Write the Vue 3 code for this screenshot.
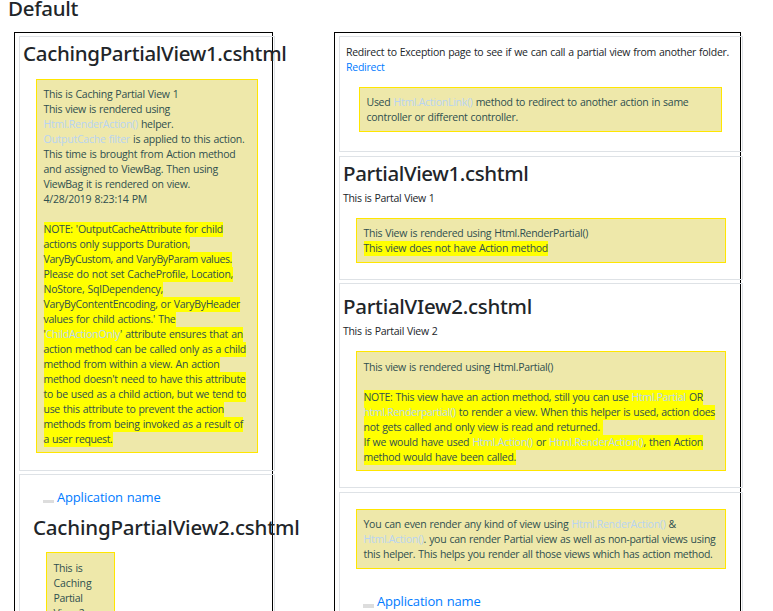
<script setup>
import { h } from 'vue'

// Spreads a line of text over a given width by adjusting its letter spacing.
const vFit = {
  mounted(el, { value }) {
    if (!value) return
    const natural = el.getBoundingClientRect().width
    el.style.letterSpacing = (value - natural) / el.textContent.length + 'px'
  },
}

// Turns "text [link] text" into segments; odd ones are links.
const segments = (text) => text.split(/[[\]]/)

const cachingInfo = [
  ['This is Caching Partial View 1', 135],
  ['This view is rendered using', 126.5],
  ['[Html.RenderAction()] helper.', 130],
  ['[OutputCache filter] is applied to this action.', 201],
  ['This time is brought from Action method', 192],
  ['and assigned to ViewBag. Then using', 174.5],
  ['ViewBag it is rendered on view.', 146.5],
  ['4/28/2019 8:23:14 PM', 103.5],
  ['', 0],
]
const cachingNote = [
  ["NOTE: 'OutputCacheAttribute for child", 179.5],
  ['actions only supports Duration,', 146.5],
  ['VaryByCustom, and VaryByParam values.', 188.5],
  ['Please do not set CacheProfile, Location,', 189.5],
  ['NoStore, SqlDependency,', 119.5],
  ['VaryByContentEncoding, or VaryByHeader', 196.5],
  ["values for child actions.' The", 132],
  ["'[ChildActionOnly]' attribute ensures that an", 199.5],
  ['action method can be called only as a child', 202.5],
  ['method from within a view. An action', 176],
  ["method doesn't need to have this attribute", 202],
  ['to be used as a child action, but we tend to', 202.5],
  ['use this attribute to prevent the action', 180.5],
  ['methods from being invoked as a result of', 199.5],
  ['a user request.', 69],
]
const caching2 = [['This is', 29], ['Caching', 38], ['Partial', 29], ['View 2', 31]]
const redirectInfo = [
  ['Used [Html.ActionLink()] method to redirect to another action in same', 322],
  ['controller or different controller.', 151.5],
]
const partial1Info = [['This View is rendered using Html.RenderPartial()', 224.5]]
const partial1Note = [['This view does not have Action method', 184.5]]
const partial2Info = [['This view is rendered using Html.Partial()', 189.5], ['', 0]]
const partial2Note = [
  ['NOTE: This view have an action method, still you can use [Html.Partial] OR', 339.5],
  ['[html.Renderpartial()] to render a view. When this helper is used, action does', 351.5],
  ['not gets called and only view is read and returned. ', 239.5],
  ['If we would have used [Html.Action()] or [Html.RenderAction()], then Action', 339.5],
  ['method would have been called.', 152.5],
]
const anyView = [
  ['You can even render any kind of view using [Html.RenderAction()] &', 312.5],
  ['[Html.Action()]. you can render Partial view as well as non-partial views using', 352],
  ['this helper. This helps you render all those views which has action method.', 349],
]

const fitLine = (width) => ({
  onVnodeMounted: ({ el }) => vFit.mounted(el, { value: width }),
})

const Lines = ({ rows, marked }) =>
  rows.map(([text, width]) =>
    h('div', { class: 'row' }, [
      h(
        'span',
        { class: ['line', { marked: marked && text }], ...fitLine(width) },
        segments(text).map((s, i) => (i % 2 ? h('a', { class: 'code' }, s) : s)),
      ),
    ]),
  )
Lines.props = { rows: Array, marked: Boolean }
</script>

<template>
  <main class="page">
    <h1 class="title"><span v-fit="70">Default</span></h1>
    <div class="columns">
      <section class="column left">
        <article class="panel caching1">
          <h2><span v-fit="263.5">CachingPartialView1.cshtml</span></h2>
          <div class="note">
            <Lines :rows="cachingInfo" />
            <Lines :rows="cachingNote" marked />
          </div>
        </article>
        <article class="panel caching2">
          <div class="brand"><i class="toggle"></i><a v-fit="103.5">Application name</a></div>
          <h2><span v-fit="266.5">CachingPartialView2.cshtml</span></h2>
          <div class="note"><Lines :rows="caching2" /></div>
        </article>
      </section>
      <section class="column right">
        <article class="panel redirect">
          <p><span v-fit="383">Redirect to Exception page to see if we can call a partial view from another folder.</span></p>
          <p><a v-fit="38.5">Redirect</a></p>
          <div class="note"><Lines :rows="redirectInfo" /></div>
        </article>
        <article class="panel partial1">
          <h2><span v-fit="185.5">PartialView1.cshtml</span></h2>
          <p><span v-fit="91.5">This is Partal View 1</span></p>
          <div class="note">
            <Lines :rows="partial1Info" />
            <Lines :rows="partial1Note" marked />
          </div>
        </article>
        <article class="panel partial2">
          <h2><span v-fit="189">PartialVIew2.cshtml</span></h2>
          <p><span v-fit="94.5">This is Partail View 2</span></p>
          <div class="note">
            <Lines :rows="partial2Info" />
            <Lines :rows="partial2Note" marked />
          </div>
        </article>
        <article class="panel anyview">
          <div class="note"><Lines :rows="anyView" /></div>
          <div class="brand"><i class="toggle"></i><a v-fit="103.5">Application name</a></div>
        </article>
      </section>
    </div>
  </main>
</template>

<style>
html, body { overflow: hidden; background: #fff; }
.row { height: 15px; }
.line { display: inline-block; height: 15px; line-height: 15px; vertical-align: top; white-space: pre; }
.line.marked { background: #ff0; }
.line .code { color: #b8d4f2; }
</style>

<style scoped>
.page {
  box-sizing: border-box;
  width: 773px;
  height: 611px;
  overflow: hidden;
  font: 10.5px/15px "Open Sans", "Noto Sans", sans-serif;
  word-spacing: 0.6px;
  color: #212529;
}
h1, h2 {
  margin: 0;
  font-family: "Noto Sans", "Open Sans", sans-serif;
  font-size: 20.5px;
  font-weight: 500;
  line-height: 25px;
  white-space: nowrap;
}
h1 span, h2 span, p span, p a, .brand a { display: inline-block; }
a { color: #007bff; }
p { margin: 0; height: 15px; white-space: nowrap; }
.title { height: 32px; padding-left: 8px; line-height: 16px; }
.columns { display: flex; align-items: flex-start; gap: 61px; padding-left: 14px; }
.column {
  box-sizing: border-box;
  display: flex;
  flex-direction: column;
  height: 700px;
  border: 1px solid #000;
  padding: 3px 0 0 4px;
}
.left { width: 259px; gap: 3px; }
.right { width: 407px; }
.panel { box-sizing: border-box; flex: none; border: 1px solid #dee2e6; }
.left .panel { width: 256px; }
.right .panel { width: 404px; }
.note {
  box-sizing: border-box;
  border: 1px solid #ffe600;
  background: #eee8aa;
  color: #2f4f4f;
  padding: 7px 0 0 6.5px;
}
.brand { display: flex; align-items: center; gap: 3px; height: 20px; font-size: 13px; }
.toggle { width: 11px; height: 3px; margin-top: 9px; background: #ddd; }

.caching1 { height: 435px; padding: 4px 0 0 3px; }
.caching1 .note { width: 222px; height: 374px; margin: 13px 0 0 13px; }
.caching2 { height: 260px; padding: 12px 0 0 13px; }
.caching2 .brand { padding-left: 10px; }
.caching2 .note { width: 69px; height: 130px; margin: 12px 0 0 13px; padding-top: 8px; }
.caching2 h2 { margin-top: 8px; }

.redirect { height: 116px; margin-bottom: 4px; padding: 8px 0 0 6px; }
.redirect .note { width: 363px; height: 45px; margin: 12px 0 0 13px; }
.partial1 { height: 124px; margin-bottom: 3px; padding: 4px 0 0 3px; }
.partial1 p, .partial2 p { margin-top: 5px; }
.partial1 .note { width: 370px; height: 45px; margin: 12px 0 0 13px; }
.partial2 { height: 205px; margin-bottom: 4px; padding: 10px 0 0 3px; }
.partial2 .note { width: 370px; height: 120px; margin: 12px 0 0 13px; padding-top: 8px; }
.anyview { height: 200px; padding: 16px 0 0 16px; }
.anyview .note { width: 370px; height: 60px; }
.anyview .brand { margin-top: 22px; padding-left: 7px; }
.anyview .toggle { height: 4px; margin-top: 10px; }
</style>
